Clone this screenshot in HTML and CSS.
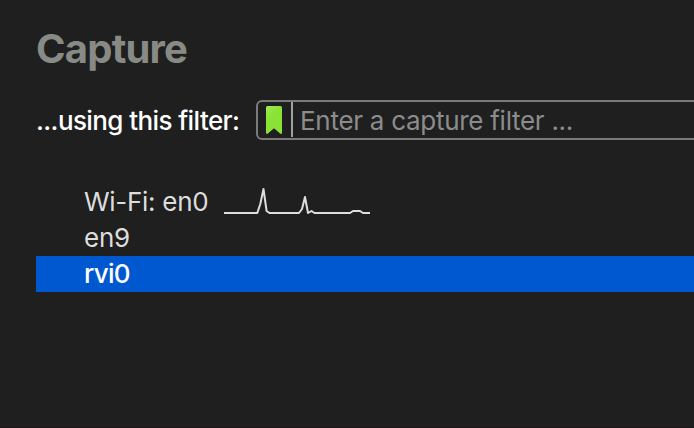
FILE: index.html
```
<!DOCTYPE html>
<html lang="en">
<head>
<meta charset="utf-8">
<title>Capture</title>
<link rel="stylesheet" href="styles.css">
</head>
<body>
<main class="capture">
  <h1 class="title"><span>Capture</span></h1>
  <div class="filter-row">
    <label class="filter-label"><span>...using this filter:</span></label>
    <div class="filter-box">
      <svg class="bookmark" viewBox="0 0 16 28" width="16" height="28">
        <defs><linearGradient id="green" x1="0" y1="0" x2="0.6" y2="1"><stop offset="0" stop-color="#a2ec55"/><stop offset="0.45" stop-color="#8ae234"/></linearGradient></defs>
        <path fill="url(#green)" d="M1.5 0H14.5Q16 0 16 1.5V26.5Q16 28.4 14.4 27.7L8 22.3L1.6 27.7Q0 28.4 0 26.5V1.5Q0 0 1.5 0Z"/>
      </svg>
      <div class="divider"></div>
      <div class="placeholder"><span>Enter a capture filter ...</span></div>
    </div>
  </div>
  <ul class="interfaces">
    <li class="interface"><span class="wifi">Wi-Fi: en0</span>
      <svg class="sparkline" viewBox="224 184 148 36" width="148" height="36">
        <polyline points="224,213 257.3,213 260.3,204 263.5,189 266.6,211 269.5,213 299,213 302,209 305,197 308,213 311.5,211 314.5,213 350,213 353,211 360,211 363,213 370,213"/>
      </svg>
    </li>
    <li class="interface"><span class="en">en9</span></li>
    <li class="interface selected"><span class="rvi">rvi0</span></li>
  </ul>
</main>
</body>
</html>
```
FILE: styles.css
```
* { box-sizing: border-box; }
body {
  margin: 0;
  height: 428px;
  overflow: hidden;
  background: #1f1f1f;
  color: #dddddd;
  font: 26px/36px Inter, "Liberation Sans", sans-serif;
  letter-spacing: -0.28px;
  white-space: nowrap;
}
.capture { padding: 24px 0 0 36px; height: 428px; border-bottom: 1px solid #1d171b; }
.title {
  margin: 0;
  height: 50px;
  font-size: 40px;
  line-height: 50px;
  font-weight: 700;
  letter-spacing: -0.8px;
  color: #888a85;
}
.filter-row { display: flex; margin-top: 26px; height: 40px; }
.filter-label { width: 220px; line-height: 42px; color: #fff; font-weight: 500; letter-spacing: -0.59px; }
.filter-box {
  display: flex;
  flex: 1;
  margin-right: -10px;
  padding-left: 8px;
  border: 2px solid #7b7b7b;
  border-radius: 6px;
}
.bookmark { margin-top: 4px; }
.divider { width: 2px; height: 35px; margin: 0 7px 0 9px; background: #a0a0a0; }
.placeholder { line-height: 38px; color: #8c8c8c; }
.interfaces { list-style: none; margin: 44px 0 0; padding: 0; }
.interface { display: flex; height: 36px; padding-left: 48px; }
.wifi { width: 140px; }
.sparkline polyline { fill: none; stroke: #ddd; stroke-width: 2; stroke-linejoin: round; }
.selected { background: #0058d0; color: #fff; font-weight: 500; letter-spacing: -0.7px; }
```
